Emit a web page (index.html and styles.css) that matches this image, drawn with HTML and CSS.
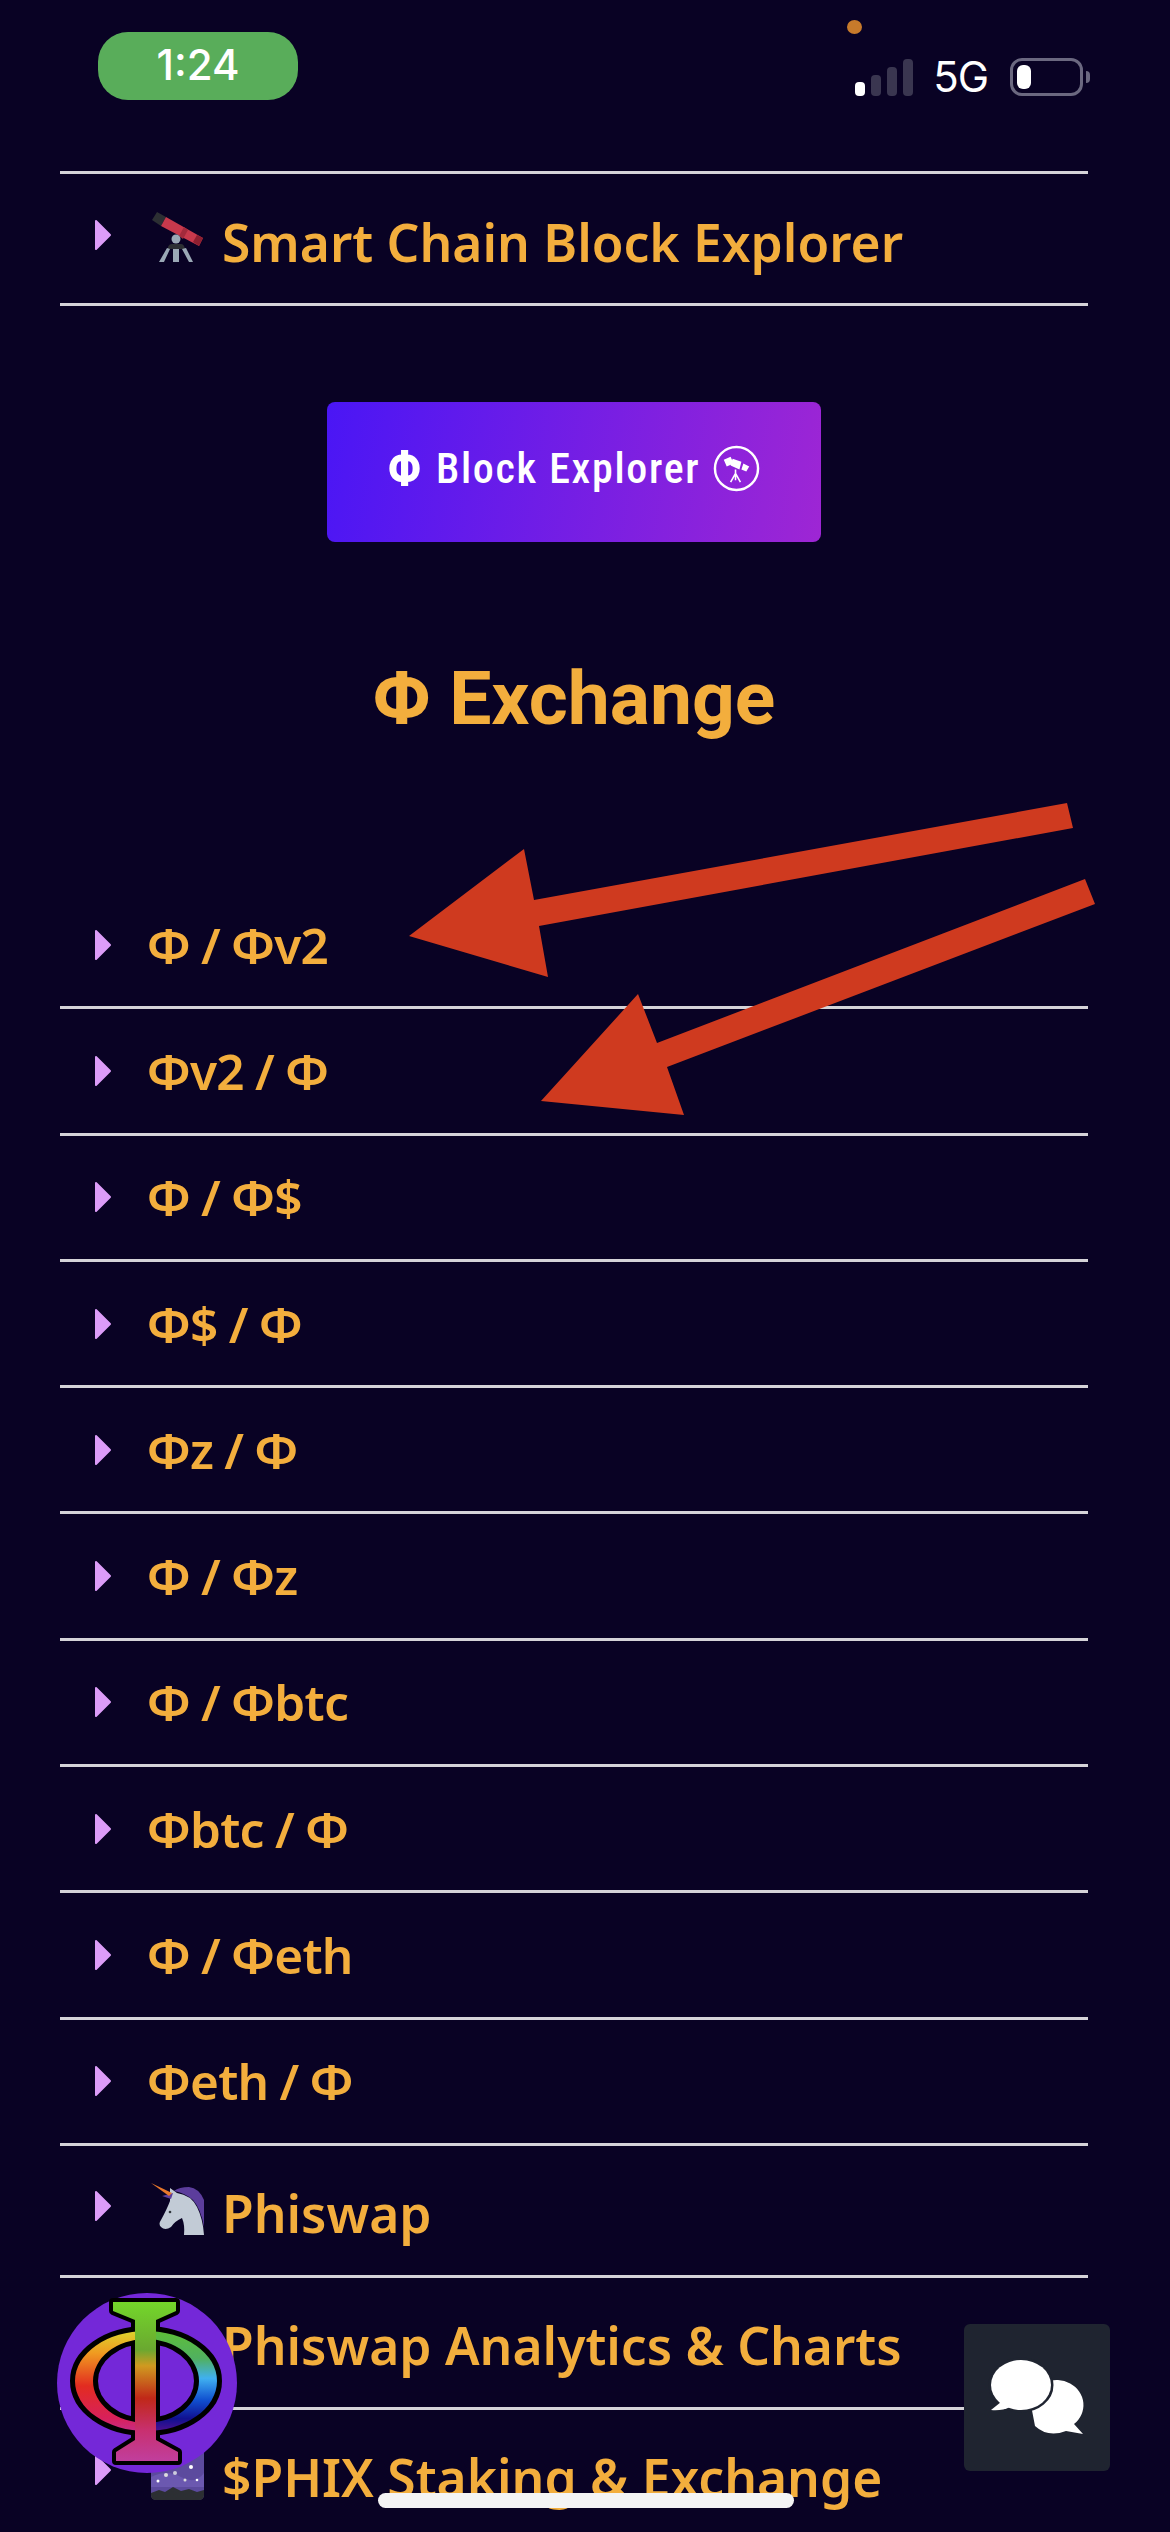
FILE: index.html
```html
<!DOCTYPE html>
<html lang="en">
<head>
    <meta charset="UTF-8">
    <meta name="viewport" content="width=device-width, initial-scale=1.0">
    <title>Phi Exchange</title>
    <link rel="stylesheet" href="styles.css">
</head>
<body>
    <!-- Status bar -->
    <div class="status-bar">
        <div class="time-pill">1:24</div>
        <div class="status-right">
            <span class="mic-dot"></span>
            <div class="status-icons">
                <div class="signal">
                    <span class="bar bar-1"></span>
                    <span class="bar bar-2"></span>
                    <span class="bar bar-3"></span>
                    <span class="bar bar-4"></span>
                </div>
                <span class="network">5G</span>
                <div class="battery"><span class="battery-level"></span></div>
                <span class="battery-nub"></span>
            </div>
        </div>
    </div>

    <div class="content">
        <div class="row row-emoji row-first">
            <svg class="caret" viewBox="0 0 18 32"><path d="M2 2 L16 16 L2 30 Z" fill="#dc9cf8" stroke="#dc9cf8" stroke-width="2" stroke-linejoin="round"/></svg>
            <svg class="emoji" viewBox="0 0 60 53">
                <path d="M10 1 L19 6 L14 15 L5 9 Z" fill="#2c2f33"/>
                <path d="M19 6 L56 27 L52 35 L14 15 Z" fill="#c8394c"/>
                <path d="M37 16 L41 19 L36 28 L32 25 Z" fill="#a32a3c"/>
                <path d="M50 24 L56 27 L52 35 L46 31 Z" fill="#8e1f30"/>
                <circle cx="29" cy="28" r="4.5" fill="#9aa8b5"/>
                <path d="M21 36 Q22 33 25 33 L34 33 Q37 33 38 38 L21 38 Z" fill="#2c2f33"/>
                <path d="M20 37 L23 38 L17 51 L12 51 Z M26 38 L32 38 L32 51 L26 51 Z M35 38 L39 37 L46 51 L42 51 Z" fill="#9aa8b5"/>
            </svg>
            <span>Smart Chain Block Explorer</span>
        </div>

        <div class="button-wrap">
            <a class="explorer-btn">
                <span class="phi">Φ</span> Block Explorer
                <svg class="scope-icon" viewBox="0 0 48 48">
                    <circle cx="24" cy="24" r="22" fill="none" stroke="#fff" stroke-width="2.5"/>
                    <path d="M11 15 L18 12 L21 19 L14 22 Z M20 14 L29 17 L27 25 L18 21 Z M31 19 L37 22 L34 27 L29 25 Z" fill="#fff"/>
                    <path d="M23 25 L23 29 M23 29 L18 38 M23 29 L28 38 M23 29 L23 36" stroke="#fff" stroke-width="1.6" fill="none"/>
                </svg>
            </a>
        </div>

        <h2 class="section-title">Φ Exchange</h2>

        <div class="row row-pair">
            <svg class="caret" viewBox="0 0 18 32"><path d="M2 2 L16 16 L2 30 Z" fill="#dc9cf8" stroke="#dc9cf8" stroke-width="2" stroke-linejoin="round"/></svg>
            <span>Φ / Φv2</span>
        </div>
        <div class="row row-pair">
            <svg class="caret" viewBox="0 0 18 32"><path d="M2 2 L16 16 L2 30 Z" fill="#dc9cf8" stroke="#dc9cf8" stroke-width="2" stroke-linejoin="round"/></svg>
            <span>Φv2 / Φ</span>
        </div>
        <div class="row row-pair">
            <svg class="caret" viewBox="0 0 18 32"><path d="M2 2 L16 16 L2 30 Z" fill="#dc9cf8" stroke="#dc9cf8" stroke-width="2" stroke-linejoin="round"/></svg>
            <span>Φ / Φ$</span>
        </div>
        <div class="row row-pair">
            <svg class="caret" viewBox="0 0 18 32"><path d="M2 2 L16 16 L2 30 Z" fill="#dc9cf8" stroke="#dc9cf8" stroke-width="2" stroke-linejoin="round"/></svg>
            <span>Φ$ / Φ</span>
        </div>
        <div class="row row-pair">
            <svg class="caret" viewBox="0 0 18 32"><path d="M2 2 L16 16 L2 30 Z" fill="#dc9cf8" stroke="#dc9cf8" stroke-width="2" stroke-linejoin="round"/></svg>
            <span>Φz / Φ</span>
        </div>
        <div class="row row-pair">
            <svg class="caret" viewBox="0 0 18 32"><path d="M2 2 L16 16 L2 30 Z" fill="#dc9cf8" stroke="#dc9cf8" stroke-width="2" stroke-linejoin="round"/></svg>
            <span>Φ / Φz</span>
        </div>
        <div class="row row-pair">
            <svg class="caret" viewBox="0 0 18 32"><path d="M2 2 L16 16 L2 30 Z" fill="#dc9cf8" stroke="#dc9cf8" stroke-width="2" stroke-linejoin="round"/></svg>
            <span>Φ / Φbtc</span>
        </div>
        <div class="row row-pair">
            <svg class="caret" viewBox="0 0 18 32"><path d="M2 2 L16 16 L2 30 Z" fill="#dc9cf8" stroke="#dc9cf8" stroke-width="2" stroke-linejoin="round"/></svg>
            <span>Φbtc / Φ</span>
        </div>
        <div class="row row-pair">
            <svg class="caret" viewBox="0 0 18 32"><path d="M2 2 L16 16 L2 30 Z" fill="#dc9cf8" stroke="#dc9cf8" stroke-width="2" stroke-linejoin="round"/></svg>
            <span>Φ / Φeth</span>
        </div>
        <div class="row row-pair">
            <svg class="caret" viewBox="0 0 18 32"><path d="M2 2 L16 16 L2 30 Z" fill="#dc9cf8" stroke="#dc9cf8" stroke-width="2" stroke-linejoin="round"/></svg>
            <span>Φeth / Φ</span>
        </div>

        <div class="row row-emoji">
            <svg class="caret" viewBox="0 0 18 32"><path d="M2 2 L16 16 L2 30 Z" fill="#dc9cf8" stroke="#dc9cf8" stroke-width="2" stroke-linejoin="round"/></svg>
            <svg class="emoji" viewBox="0 0 60 53">
                <path d="M27 8 Q32 4 42 4 Q52 5 57 17 L57 44 Q54 26 46 17 Q38 10 27 8 Z" fill="#5c3d9c"/>
                <path d="M23 5 L30 10 Q44 12 50 24 Q56 36 57 52 L37 52 Q38 42 35 35 Q28 38 24 44 Q18 48 14 44 Q11 41 14 37 Q20 26 23 18 Z" fill="#c2cbd6"/>
                <path d="M15 13 L26 10 L24 16 Z" fill="#5c3d9c"/>
                <path d="M4 0 L25 10 L22 13 Z" fill="#e8782a"/>
                <circle cx="23" cy="29" r="1.3" fill="#31373d"/>
            </svg>
            <span>Phiswap</span>
        </div>
        <div class="row row-emoji">
            <svg class="caret" viewBox="0 0 18 32"><path d="M2 2 L16 16 L2 30 Z" fill="#dc9cf8" stroke="#dc9cf8" stroke-width="2" stroke-linejoin="round"/></svg>
            <svg class="emoji" viewBox="0 0 60 53">
                <rect x="4" y="0" width="53" height="53" rx="5" fill="#e1e8ed"/>
            </svg>
            <span>Phiswap Analytics &amp; Charts</span>
        </div>
        <div class="row row-emoji">
            <svg class="caret" viewBox="0 0 18 32"><path d="M2 2 L16 16 L2 30 Z" fill="#dc9cf8" stroke="#dc9cf8" stroke-width="2" stroke-linejoin="round"/></svg>
            <svg class="emoji" viewBox="0 0 60 53">
                <rect x="4" y="0" width="53" height="53" rx="5" fill="#5c4a9e"/>
                <path d="M4 30 Q20 22 34 30 T57 26 L57 40 L4 40 Z" fill="#6b58b0"/>
                <path d="M4 46 L12 43 L18 45 L26 40 L34 44 L42 42 L50 45 L57 43 L57 48 Q57 53 52 53 L9 53 Q4 53 4 48 Z" fill="#2c2f33"/>
                <circle cx="11" cy="34" r="1.5" fill="#fff"/><circle cx="19" cy="28" r="2" fill="#ddd"/>
                <circle cx="28" cy="26" r="2" fill="#ccd"/><circle cx="44" cy="20" r="2" fill="#fff"/>
                <circle cx="38" cy="33" r="1.5" fill="#ddd"/><circle cx="50" cy="33" r="1.3" fill="#fff"/>
            </svg>
            <span>$PHIX Staking &amp; Exchange</span>
        </div>
    </div>

    <!-- Flechas dibujadas encima de la captura -->
    <svg class="arrows" viewBox="0 0 1170 2532">
        <polygon points="1067,803 1073,828 539,926 548,977 409,936 524,849 534,900" fill="#cf3a1f"/>
        <polygon points="1085,879 1095,904 667,1067 684,1115 541,1101 638,994 657,1043" fill="#cf3a1f"/>
    </svg>

    <!-- Logo flotante -->
    <svg class="float-logo" viewBox="0 0 180 180">
        <defs>
            <linearGradient id="ring-left" gradientUnits="userSpaceOnUse" x1="0" y1="33" x2="0" y2="142">
                <stop offset="0" stop-color="#d8e030"/>
                <stop offset="0.25" stop-color="#f09a20"/>
                <stop offset="0.55" stop-color="#e22c20"/>
                <stop offset="0.85" stop-color="#d8205c"/>
                <stop offset="1" stop-color="#c03090"/>
            </linearGradient>
            <linearGradient id="ring-right" gradientUnits="userSpaceOnUse" x1="0" y1="33" x2="0" y2="142">
                <stop offset="0" stop-color="#60c030"/>
                <stop offset="0.3" stop-color="#50b060"/>
                <stop offset="0.48" stop-color="#40b0f0"/>
                <stop offset="0.68" stop-color="#1050d0"/>
                <stop offset="0.85" stop-color="#101090"/>
                <stop offset="1" stop-color="#601090"/>
            </linearGradient>
            <linearGradient id="stem" gradientUnits="userSpaceOnUse" x1="0" y1="8" x2="0" y2="170">
                <stop offset="0" stop-color="#74d82a"/>
                <stop offset="0.3" stop-color="#6aa830"/>
                <stop offset="0.4" stop-color="#d09a20"/>
                <stop offset="0.6" stop-color="#c02818"/>
                <stop offset="0.8" stop-color="#c83070"/>
                <stop offset="1" stop-color="#c040a0"/>
            </linearGradient>
            <clipPath id="half-left"><rect x="0" y="0" width="89" height="180"/></clipPath>
            <clipPath id="half-right"><rect x="89" y="0" width="91" height="180"/></clipPath>
        </defs>
        <circle cx="90" cy="90" r="90" fill="#7428d8"/>
        <path d="M18 88 A71 50 0 1 0 160 88 A71 50 0 1 0 18 88 Z M36 88 A53 42 0 1 1 142 88 A53 42 0 1 1 36 88 Z" fill="#000" fill-rule="evenodd" stroke="#000" stroke-width="10"/>
        <path d="M56 9 H119 V18 L99 27 V147 L121 159 V168 H59 V159 L78 147 V27 L56 18 Z" fill="#000" stroke="#000" stroke-width="8" stroke-linejoin="round"/>
        <path d="M18 88 A71 50 0 1 0 160 88 A71 50 0 1 0 18 88 Z M36 88 A53 42 0 1 1 142 88 A53 42 0 1 1 36 88 Z" fill="url(#ring-left)" fill-rule="evenodd" clip-path="url(#half-left)"/>
        <path d="M18 88 A71 50 0 1 0 160 88 A71 50 0 1 0 18 88 Z M36 88 A53 42 0 1 1 142 88 A53 42 0 1 1 36 88 Z" fill="url(#ring-right)" fill-rule="evenodd" clip-path="url(#half-right)"/>
        <path d="M56 9 H119 V18 L99 27 V147 L121 159 V168 H59 V159 L78 147 V27 L56 18 Z" fill="url(#stem)"/>
    </svg>

    <!-- Boton de chat -->
    <div class="chat-btn">
        <svg class="chat-icon" viewBox="0 0 146 147">
            <path d="M66 76 A27 25 0 1 1 110 100 L119 110 L102 107 Q84 114 71 102 Z" fill="#fff"/>
            <ellipse cx="57" cy="61" rx="30" ry="25" fill="#fff" stroke="#1f2430" stroke-width="5"/>
            <ellipse cx="57" cy="61" rx="30" ry="25" fill="#fff"/>
            <path d="M37 78 L27 86 Q38 87 46 83 Z" fill="#fff"/>
        </svg>
    </div>

    <div class="home-bar"></div>
</body>
</html>
```

FILE: styles.css
```css
/* Estilos basicos */
html, body {
    height: 2532px;
    overflow: hidden;
}

body {
    margin: 0;
    padding: 0;
    background-color: #090224;
    font-family: "Noto Sans", Arial, sans-serif;
    color: #f3ae3d;
}

/* Barra de estado */
.status-bar {
    display: flex;
    justify-content: space-between;
    align-items: flex-start;
    height: 171px;
    padding: 20px 80px 0 98px;
    box-sizing: border-box;
}

.time-pill {
    margin-top: 12px;
    width: 200px;
    height: 68px;
    border-radius: 30px;
    background-color: #59ad5a;
    color: #fff;
    font-family: Inter, sans-serif;
    font-size: 42px;
    font-weight: 500;
    line-height: 66px;
    text-align: center;
}

.status-right {
    display: flex;
    flex-direction: column;
    align-items: flex-start;
}

.mic-dot {
    width: 15px;
    height: 14px;
    margin-left: -8px;
    border-radius: 50%;
    background-color: #c77a2b;
}

.status-icons {
    display: flex;
    align-items: flex-end;
    margin-top: 24px;
}

.signal {
    display: flex;
    align-items: flex-end;
    gap: 6px;
    height: 38px;
}

.bar {
    width: 10px;
    border-radius: 4px;
    background-color: #3a3650;
}

.bar-1 { height: 14px; background-color: #fff; }
.bar-2 { height: 21px; }
.bar-3 { height: 29px; }
.bar-4 { height: 37px; }

.network {
    margin-left: 20px;
    color: #fff;
    font-family: Inter, sans-serif;
    font-size: 42px;
    font-weight: 400;
    line-height: 38px;
    letter-spacing: -1px;
}

.battery {
    box-sizing: border-box;
    width: 73px;
    height: 38px;
    margin-left: 22px;
    padding: 4px;
    border: 3px solid #6b6880;
    border-radius: 12px;
}

.battery-level {
    display: block;
    width: 14px;
    height: 24px;
    border-radius: 6px;
    background-color: #fff;
}

.battery-nub {
    width: 4px;
    height: 12px;
    margin: 0 0 13px 3px;
    border-radius: 0 4px 4px 0;
    background-color: #6b6880;
}

/* Lista */
.content {
    margin: 0 82px 0 60px;
}

.row {
    display: flex;
    align-items: center;
    box-sizing: border-box;
    height: 126.3px;
    padding-left: 34px;
    border-bottom: 3px solid #d5d3d8;
    font-size: 51.5px;
    font-weight: 600;
    white-space: nowrap;
}

.row-pair {
    font-size: 49.5px;
    letter-spacing: -0.7px;
    word-spacing: -1px;
}

.row-emoji {
    height: 132px;
    padding-top: 6px;
}

.row-first {
    height: 135px;
    border-top: 3px solid #d5d3d8;
}

.caret {
    flex: none;
    width: 18px;
    height: 32px;
    margin-right: 35px;
}

.row-emoji .caret {
    margin-top: -14px;
}

.emoji {
    flex: none;
    width: 60px;
    height: 53px;
    margin: -8px 15px 0 0;
}

/* Boton */
.button-wrap {
    display: flex;
    justify-content: center;
    margin-top: 96px;
}

.explorer-btn {
    display: flex;
    align-items: center;
    justify-content: center;
    gap: 13px;
    box-sizing: border-box;
    width: 494px;
    height: 140px;
    padding-bottom: 7px;
    border-radius: 8px;
    background: linear-gradient(100deg, #4a16f5 0%, #9e26d4 100%);
    color: #fff;
    font-family: Roboto, sans-serif;
    font-size: 42px;
    font-stretch: 86%;
    font-weight: 500;
    letter-spacing: 1.7px;
}

.phi {
    font-size: 50px;
    font-weight: 700;
}

.scope-icon {
    width: 47px;
    height: 47px;
}

.section-title {
    box-sizing: border-box;
    height: 341px;
    margin: 0;
    padding-top: 116px;
    color: #f3ae3d;
    font-family: Roboto, sans-serif;
    font-size: 75px;
    font-stretch: 96%;
    font-weight: 700;
    line-height: 80px;
    text-align: center;
}

/* Elementos flotantes */
.arrows {
    position: absolute;
    top: 0;
    left: 0;
    width: 1170px;
    height: 2532px;
    pointer-events: none;
}

.float-logo {
    position: absolute;
    left: 57px;
    top: 2293px;
    width: 180px;
    height: 180px;
}

.chat-btn {
    position: absolute;
    left: 964px;
    top: 2324px;
    width: 146px;
    height: 147px;
    border-radius: 6px;
    background-color: #1f2430;
}

.chat-icon {
    display: block;
    width: 146px;
    height: 147px;
}

.home-bar {
    position: absolute;
    left: 378px;
    top: 2493px;
    width: 416px;
    height: 15px;
    border-radius: 8px;
    background-color: #f4f4f4;
}
```
